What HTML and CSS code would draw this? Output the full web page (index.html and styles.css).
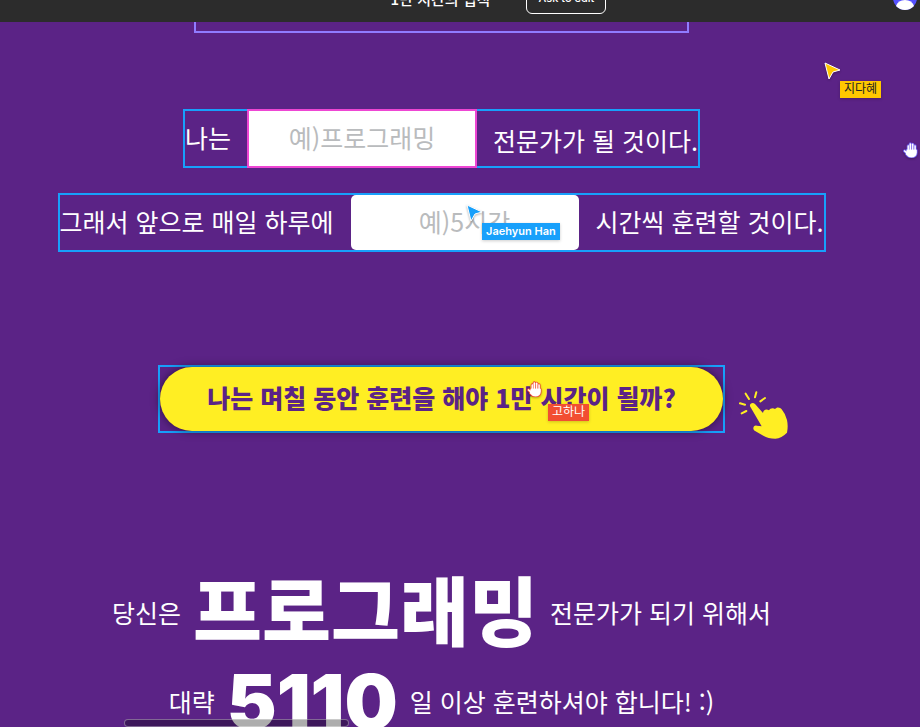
FILE: index.html
```html
<!DOCTYPE html>
<html lang="ko">
<head>
  <meta charset="utf-8">
  <meta name="viewport" content="width=device-width, initial-scale=1">
  <title>1만 시간의 법칙</title>
  <link rel="stylesheet" href="styles.css">
</head>
<body>
  <svg class="defs" aria-hidden="true">
    <symbol id="hand" viewBox="0 0 48 48">
      <g class="hand-edge">
        <path d="M16 12V28M22 6V28M29 7V28M36 12V28M5 27L14 35"/>
        <path d="M13 25H39V32Q38 44 25 44Q17 44 11 36Z"/>
      </g>
      <g class="hand-fill">
        <path d="M16 12V28M22 6V28M29 7V28M36 12V28M5 27L14 35"/>
        <path d="M13 25H39V32Q38 44 25 44Q17 44 11 36Z"/>
      </g>
      <path class="hand-lines" d="M19 12V23M26 10V23M33 12V23"/>
    </symbol>
    <symbol id="arrow" viewBox="0 0 18 18">
      <path class="arrow-shape" d="M1 1L16 8L9 10L5 17Z"/>
    </symbol>
  </svg>

  <header class="topbar">
    <div class="toolbar">
      <div class="file">
        <span class="file-name">1만 시간의 법칙</span>
        <svg class="chevron" viewBox="0 0 8 8" aria-hidden="true"><path d="M1 3L4 6L7 3"/></svg>
        <button class="ask" type="button">Ask to edit</button>
      </div>
      <svg class="avatar" viewBox="0 0 24 24" role="img" aria-label="프로필">
        <circle cx="12" cy="12" r="12" fill="#5551ff"/>
        <circle cx="12" cy="8" r="5" fill="#fff"/>
        <path d="M3 20Q5 14 12 14T21 20Q17 24 12 24T3 20Z" fill="#fff"/>
      </svg>
    </div>
  </header>

  <main class="canvas">
    <div class="frame"></div>

    <form class="goal">
      <div class="sentence">
        <label class="words" for="job">나는</label>
        <input class="field field-selected" id="job" type="text" placeholder="예)프로그래밍">
        <span class="words sentence-end">전문가가 될 것이다.</span>
      </div>
      <div class="sentence">
        <label class="words" for="hours">그래서 앞으로 매일 하루에</label>
        <input class="field" id="hours" type="text" placeholder="예)5시간">
        <span class="words">시간씩 훈련할 것이다.</span>
      </div>
      <div class="action">
        <button class="calculate" type="button">나는 며칠 동안 훈련을 해야 1만 시간이 될까?</button>
        <svg class="click" viewBox="897 108 147 144" aria-hidden="true">
          <path class="rays" d="M917 116L927 132M949 112L945 127M975 129L961 139M900 145L915 149M905 175L919 168"/>
          <path class="pointer" d="M930 154C928 146 938 141 945 147L969 174C970 164 979 161 987 166C990 159 1000 158 1005 162C1010 155 1020 156 1025 163Q1036 176 1041 195Q1045 214 1041 233Q1025 249 1006 251Q984 251 970 242L944 227C936 221 941 210 950 212L965 214Z"/>
        </svg>
      </div>
    </form>

    <section class="result">
      <p><span>당신은</span><strong>프로그래밍</strong><span>전문가가 되기 위해서</span></p>
      <p><span>대략</span><strong>5110</strong><span>일 이상 훈련하셔야 합니다! :)</span></p>
    </section>

    <div class="scrollbar"></div>
  </main>

  <div class="cursor yellow">
    <svg class="arrow" aria-hidden="true"><use href="#arrow"/></svg>
    <span class="name">지다혜</span>
  </div>
  <div class="cursor violet">
    <svg class="hand" aria-hidden="true"><use href="#hand"/></svg>
  </div>
  <div class="cursor blue">
    <svg class="arrow" aria-hidden="true"><use href="#arrow"/></svg>
    <span class="name">Jaehyun Han</span>
  </div>
  <div class="cursor red">
    <svg class="hand" aria-hidden="true"><use href="#hand"/></svg>
    <span class="name">고하나</span>
  </div>
</body>
</html>
```
FILE: styles.css
```css
* { box-sizing: border-box; }

body {
  position: relative;
  display: flex;
  flex-direction: column;
  height: 100vh;
  margin: 0;
  overflow: hidden;
  background: #5b2386;
  color: #fff;
  font-family: "Noto Sans CJK KR", sans-serif;
}

.defs { position: absolute; width: 0; height: 0; }

/* Editor toolbar, scrolled partly out of view */
.topbar {
  display: flex;
  flex: none;
  align-items: flex-end;
  height: 22px;
  overflow: hidden;
  background: #2c2c2c;
}

.toolbar {
  display: flex;
  flex: 1;
  align-items: center;
  height: 48px;
  padding: 0 3px 0 104px;
}

.file {
  display: flex;
  align-items: center;
  margin: 0 auto;
}

.file-name { font-size: 15px; font-weight: 500; }

.chevron {
  width: 8px;
  height: 8px;
  margin: 0 20px 0 8px;
  fill: none;
  stroke: #8c8c8c;
}

.ask {
  width: 80px;
  height: 32px;
  padding: 0;
  border: 1px solid #fff;
  border-radius: 6px;
  background: none;
  color: #fff;
  font: 500 11px Inter, sans-serif;
}

.avatar { width: 24px; height: 24px; }

.canvas {
  display: flex;
  flex: 1;
  flex-direction: column;
  align-items: center;
  min-height: 0;
  padding-right: 37px;
  overflow: hidden;
}

.frame {
  flex: none;
  width: 56%;
  height: 11px;
  border: 2px solid #907cff;
  border-top: 0;
}

/* Form */
.goal {
  display: flex;
  flex: none;
  flex-direction: column;
  align-items: center;
  gap: 25px;
  margin-top: 76px;
  font-size: 25px;
  line-height: 46px;
  white-space: nowrap;
}

.sentence {
  display: flex;
  align-items: center;
  gap: 17px;
  height: 59px;
  border: 2px solid #18a0fb;
}

.words { padding-bottom: 3px; }
.sentence-end { align-self: flex-end; }

.field {
  width: 228px;
  height: 55px;
  padding: 0 0 4px;
  border: 0;
  border-radius: 5px;
  background: #fff;
  color: #5b2386;
  font: inherit;
  text-align: center;
}

.field::placeholder { color: #b9bbbd; opacity: 1; }

.field-selected {
  width: 230px;
  height: 59px;
  margin: -2px -1px;
  border: 2px solid #ee46d3;
  border-radius: 0;
}

.action {
  position: relative;
  margin-top: 88px;
  border: 2px solid #18a0fb;
}

.calculate {
  display: block;
  height: 64px;
  padding: 0 47px 4px;
  border: 0;
  border-radius: 32px;
  background: #ffee23;
  box-shadow: 0 0 10px rgba(0, 0, 0, .5);
  color: #5b2386;
  font: 900 25px "Noto Sans CJK KR", sans-serif;
}

.click {
  position: absolute;
  top: 24px;
  left: calc(100% + 16px);
  width: 49px;
  height: 48px;
}

.rays {
  fill: none;
  stroke: #ffee23;
  stroke-width: 6;
  stroke-linecap: round;
}

.pointer { fill: #ffee23; }

/* Result */
.result {
  flex: none;
  margin-top: 135px;
  font-size: 25px;
  line-height: 89px;
  white-space: nowrap;
}

.result p {
  display: flex;
  align-items: center;
  justify-content: center;
  gap: 12px;
  height: 89px;
  margin: 0;
}

.result strong {
  font-family: Inter, "Noto Sans CJK KR", sans-serif;
  font-size: 75px;
  font-weight: 900;
}

.scrollbar {
  position: absolute;
  bottom: 0;
  left: 124px;
  width: 225px;
  height: 8px;
  border: 1px solid rgba(255, 255, 255, .35);
  border-radius: 4px;
  background: rgba(0, 0, 0, .32);
}

/* Collaborator cursors on the free canvas */
.cursor { position: absolute; }

.cursor svg {
  display: block;
  overflow: visible;
  filter: drop-shadow(0 1px 1px rgba(0, 0, 0, .3));
}

.arrow { width: 18px; height: 18px; }
.hand { width: 16px; height: 16px; }

.arrow-shape {
  fill: var(--tint);
  stroke: #fff;
  stroke-width: 1;
}

.hand-edge, .hand-fill {
  stroke-linecap: round;
  stroke-linejoin: round;
}

.hand-edge { fill: var(--tint); stroke: var(--tint); stroke-width: 10; }
.hand-fill { fill: #fff; stroke: #fff; stroke-width: 5; }
.hand-lines { fill: none; stroke: var(--tint); stroke-width: 1; }

.name {
  position: absolute;
  top: 19px;
  left: 16px;
  height: 17px;
  padding: 0 4px;
  background: var(--tint);
  box-shadow: 0 1px 3px rgba(0, 0, 0, .2);
  font: 12px/16px Inter, "Noto Sans CJK KR", sans-serif;
  white-space: nowrap;
}

.yellow { --tint: #ffc700; top: 62px; left: 824px; color: #222; }
.violet { --tint: #6b55e8; top: 142px; left: 903px; }
.blue { --tint: #18a0fb; top: 204px; left: 466px; }
.red { --tint: #f24e32; top: 381px; left: 527px; }
.blue .name { font-size: 11px; font-weight: 600; }
.red .name { top: 23px; left: 21px; }
```
